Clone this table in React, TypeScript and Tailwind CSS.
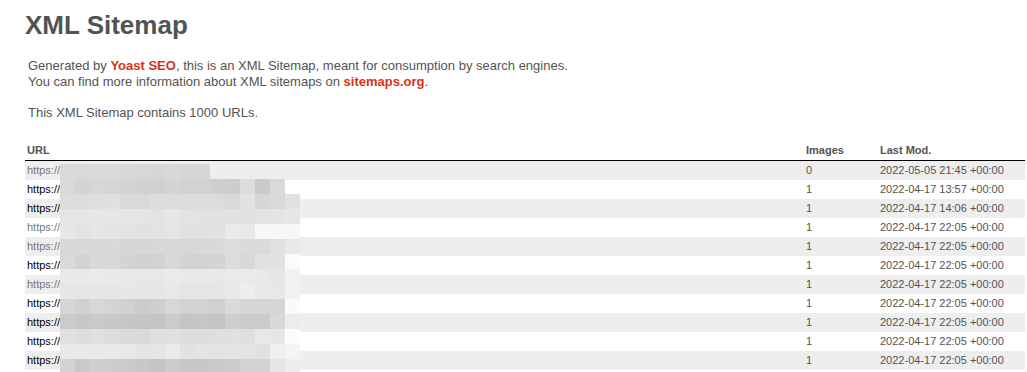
const rows = [
  { visited: true, images: 0, mod: '2022-05-05 21:45 +00:00', path: 'sample-page/' },
  { visited: false, images: 1, mod: '2022-04-17 13:57 +00:00', path: 'about-us/' },
  { visited: false, images: 1, mod: '2022-04-17 14:06 +00:00', path: 'contact/' },
  { visited: true, images: 1, mod: '2022-04-17 22:05 +00:00', path: 'services/' },
  { visited: true, images: 1, mod: '2022-04-17 22:05 +00:00', path: 'portfolio/' },
  { visited: false, images: 1, mod: '2022-04-17 22:05 +00:00', path: 'team/' },
  { visited: true, images: 1, mod: '2022-04-17 22:05 +00:00', path: 'pricing/' },
  { visited: false, images: 1, mod: '2022-04-17 22:05 +00:00', path: 'faq/' },
  { visited: false, images: 1, mod: '2022-04-17 22:05 +00:00', path: 'blog/' },
  { visited: false, images: 1, mod: '2022-04-17 22:05 +00:00', path: 'news/' },
  { visited: false, images: 1, mod: '2022-04-17 22:05 +00:00', path: 'careers/' },
];

// pixelated privacy blur over the URL column, grey levels per 15px band
const blur: (string | null)[][] = [
  ['d9', 'd9', 'da', 'db', 'd8', 'd7', 'd6', 'd8', 'd6', 'd6', null, null, null, null, null, null],
  ['d9', 'd4', 'd7', 'd6', 'd3', 'd1', 'd0', 'd4', 'd2', 'd2', 'cf', 'cd', 'dd', 'ca', 'd9', null],
  ['dd', 'dd', 'df', 'e0', 'da', 'd9', 'dd', 'dc', 'dc', 'dc', 'dc', 'd9', 'e2', 'd6', 'd9', 'e1'],
  ['e5', 'e5', 'e6', 'e6', 'e6', 'e5', 'e3', 'e6', 'e3', 'e2', 'e2', 'e1', 'e1', 'e3', 'e4', 'e6'],
  ['e7', 'e3', 'e6', 'e4', 'e4', 'e2', 'e3', 'e5', 'e1', 'e0', 'e2', 'ea', 'e8', 'f7', 'f7', 'f7'],
  ['d8', 'd8', 'd8', 'd9', 'd6', 'd6', 'd8', 'd7', 'd7', 'd8', 'd9', 'dc', 'db', 'da', 'e0', 'e9'],
  ['d9', 'd3', 'd8', 'd8', 'd4', 'd0', 'd2', 'd8', 'd3', 'd3', 'd4', 'dc', 'd8', 'e2', 'e2', 'fb'],
  ['e9', 'e9', 'eb', 'e9', 'e8', 'e8', 'e8', 'ea', 'e9', 'e8', 'e8', 'ea', 'ea', 'e9', 'e6', 'f1'],
  ['e6', 'e6', 'e6', 'e6', 'e7', 'e6', 'e6', 'e8', 'e5', 'e5', 'e6', 'e8', 'ee', 'e9', 'e8', 'f2'],
  ['d6', 'd1', 'd7', 'd4', 'd1', 'cc', 'cf', 'd7', 'd2', 'd2', 'd0', 'da', 'd6', 'd5', 'd5', 'fa'],
  ['cb', 'c8', 'ca', 'c8', 'c6', 'c5', 'c5', 'cb', 'c5', 'c6', 'c4', 'ce', 'cc', 'cb', 'd8', 'ec'],
  ['e0', 'dd', 'e0', 'dd', 'd9', 'da', 'df', 'e0', 'dd', 'dd', 'df', 'e0', 'df', 'e8', 'e6', 'fc'],
  ['e8', 'e9', 'e8', 'e9', 'e8', 'e4', 'e5', 'ea', 'e2', 'e4', 'e3', 'e3', 'e4', 'e1', 'ef', 'f4'],
  ['d3', 'c9', 'cf', 'cd', 'cb', 'c7', 'c4', 'cb', 'c8', 'c7', 'c9', 'cc', 'd2', 'd2', 'e6', 'ee'],
];

function BlurOverlay() {
  return (
    <div className="absolute left-[35px] top-[23px] flex flex-col pointer-events-none">
      {blur.map((band, i) => (
        <div key={i} className="flex h-[15px]">
          {band.map((g, j) => (
            <div
              key={j}
              className="w-[15px] h-[15px]"
              style={{ backgroundColor: g ? `#${g}${g}${g}` : 'transparent' }}
            />
          ))}
        </div>
      ))}
    </div>
  );
}

export default function App() {
  return (
    <div className="h-[372px] overflow-hidden bg-white pl-[25px] pt-[10px] text-[#545353] font-['Liberation_Sans',Arial,Helvetica,sans-serif]">
      <h1 className="text-[26px] leading-[30px] font-bold">XML Sitemap</h1>

      <div className="ml-[3px] mt-[18px] text-[13px] leading-[15.6px]">
        <p>
          Generated by <a className="text-[#da3114] font-bold">Yoast SEO</a>, this is an XML Sitemap, meant for
          consumption by search engines.
          <br />
          You can find more information about XML sitemaps on{' '}
          <a className="text-[#da3114] font-bold">sitemaps.org</a>.
        </p>
        <p className="mt-[16px]">This XML Sitemap contains 1000 URLs.</p>
      </div>

      <div className="relative mt-[20px] w-[1000px]">
        <table className="w-[1000px] table-fixed border-collapse text-[11px]">
          <colgroup>
            <col className="w-[779px]" />
            <col className="w-[74px]" />
            <col />
          </colgroup>
          <thead>
            <tr className="h-[20px]">
              <th className="text-left font-bold pl-[2px] border-b border-black">URL</th>
              <th className="text-left font-bold pl-[2px] border-b border-black">Images</th>
              <th className="text-left font-bold pl-[2px] border-b border-black">Last Mod.</th>
            </tr>
          </thead>
          <tbody>
            {rows.map((r, i) => (
              <tr key={i} className={`h-[19px] ${i % 2 === 0 ? 'bg-[#eeeeee]' : 'bg-white'}`}>
                <td className="pl-[2px] whitespace-nowrap overflow-hidden">
                  <a className={r.visited ? 'text-[#777777]' : 'text-black'}>https://example.com/{r.path}</a>
                </td>
                <td className="pl-[2px]">{r.images}</td>
                <td className="pl-[2px]">{r.mod}</td>
              </tr>
            ))}
          </tbody>
        </table>
        <BlurOverlay />
      </div>
    </div>
  );
}
